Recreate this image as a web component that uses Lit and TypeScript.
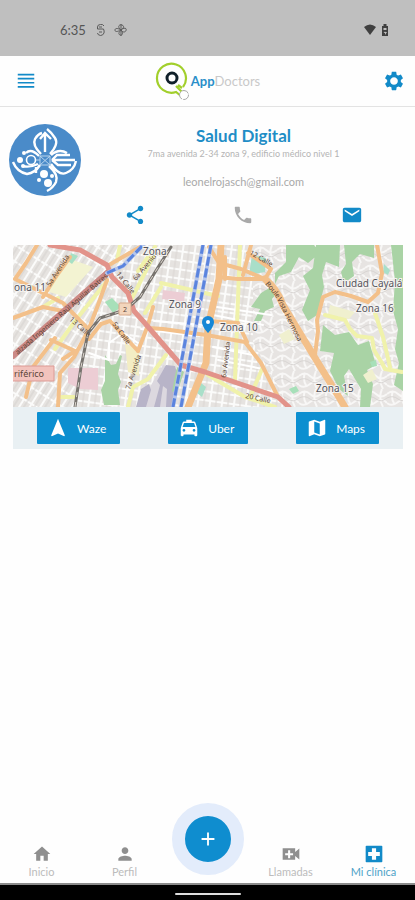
import { LitElement, html, css, svg } from "lit";
import { customElement, property } from "lit/decorators.js";

const icons: Record<string, string> = {
  share: "M18 16.08c-.76 0-1.44.3-1.96.77L8.91 12.7c.05-.23.09-.46.09-.7s-.04-.47-.09-.7l7.05-4.11c.54.5 1.25.81 2.04.81 1.66 0 3-1.34 3-3s-1.34-3-3-3-3 1.34-3 3c0 .24.04.47.09.7L8.04 9.81C7.5 9.31 6.79 9 6 9c-1.66 0-3 1.34-3 3s1.34 3 3 3c.79 0 1.5-.31 2.04-.81l7.12 4.16c-.05.21-.08.43-.08.65 0 1.61 1.31 2.92 2.92 2.92s2.92-1.31 2.92-2.92-1.31-2.92-2.92-2.92z",
  phone: "M6.62 10.79c1.44 2.83 3.76 5.14 6.59 6.59l2.2-2.2c.27-.27.67-.36 1.02-.24 1.12.37 2.33.57 3.57.57.55 0 1 .45 1 1V20c0 .55-.45 1-1 1-9.39 0-17-7.61-17-17 0-.55.45-1 1-1h3.5c.55 0 1 .45 1 1 0 1.25.2 2.45.57 3.57.11.35.03.74-.25 1.02l-2.2 2.2z",
  mail: "M20 4H4c-1.1 0-1.99.9-1.99 2L2 18c0 1.1.9 2 2 2h16c1.1 0 2-.9 2-2V6c0-1.1-.9-2-2-2zm0 4l-8 5-8-5V6l8 5 8-5v2z",
  menu: "M3 4h18v2H3zM3 8.500h18v1.800H3zM3 13h18v1.800H3zM3 17.400h18v2H3z",
  gear: "M19.43 12.98c.04-.32.07-.64.07-.98s-.03-.66-.07-.98l2.11-1.65c.19-.15.24-.42.12-.64l-2-3.46c-.12-.22-.39-.3-.61-.22l-2.49 1c-.52-.4-1.08-.73-1.69-.98l-.38-2.65C14.46 2.18 14.25 2 14 2h-4c-.25 0-.46.18-.49.42l-.38 2.65c-.61.25-1.17.59-1.69.98l-2.49-1c-.23-.09-.49 0-.61.22l-2 3.46c-.13.22-.07.49.12.64l2.11 1.65c-.04.32-.07.65-.07.98s.03.66.07.98l-2.11 1.65c-.19.15-.24.42-.12.64l2 3.46c.12.22.39.3.61.22l2.49-1c.52.4 1.08.73 1.69.98l.38 2.65c.03.24.24.42.49.42h4c.25 0 .46-.18.49-.42l.38-2.65c.61-.25 1.17-.59 1.69-.98l2.49 1c.23.09.49 0 .61-.22l2-3.46c.12-.22.07-.49-.12-.64l-2.11-1.65zM12 16.2c-2.3 0-4.2-1.9-4.2-4.2s1.9-4.2 4.2-4.2 4.2 1.9 4.2 4.2-1.9 4.2-4.2 4.2z",
  nav: "M12 2L4.5 20.29l.71.71L12 18l6.79 3 .71-.71z",
  taxi: "M18.92 6.01C18.72 5.42 18.16 5 17.5 5H15V3H9v2H6.5c-.66 0-1.21.42-1.42 1.01L3 12v8c0 .55.45 1 1 1h1c.55 0 1-.45 1-1v-1h12v1c0 .55.45 1 1 1h1c.55 0 1-.45 1-1v-8l-2.08-5.99zM6.5 16c-.83 0-1.5-.67-1.5-1.5S5.67 13 6.5 13s1.500.67 1.500 1.500S7.330 16 6.500 16zm11 0c-.83 0-1.500-.67-1.500-1.500s.67-1.500 1.500-1.500 1.500.67 1.500 1.500-.67 1.500-1.500 1.500zM5 11l1.500-4.500h11L19 11H5z",
  map: "M20.500 3l-.160.030L15 5.100 9 3 3.360 4.900c-.210.070-.360.250-.360.480V20.500c0 .280.220.500.500.500l.160-.030L9 18.900l6 2.100 5.640-1.900c.210-.070.360-.250.360-.480V3.500c0-.280-.220-.500-.500-.500zM15 19l-6-2.110V5l6 2.110V19z",
  home: "M10 20v-6h4v6h5v-8h3L12 3 2 12h3v8z",
  person: "M12 12c2.210 0 4-1.790 4-4s-1.790-4-4-4-4 1.790-4 4 1.790 4 4 4zm0 2c-2.670 0-8 1.340-8 4v2h16v-2c0-2.660-5.330-4-8-4z",
  video: "M2 5h15v4.500l5-4v13l-5-4V19H2zM8.500 7.500v3.500H5v2.500h3.500V17H11v-3.500h3.500V11H11V7.500z",
  cross: "M3 2h18a1 1 0 0 1 1 1v18a1 1 0 0 1-1 1H3a1 1 0 0 1-1-1V3a1 1 0 0 1 1-1zM9.500 5v4.500H5v5h4.500V19h5v-4.500H19v-5h-4.500V5z",
  plus: "M11 5h2v6h6v2h-6v6h-2v-6H5v-2h6z",
};

@customElement("ui-icon")
class UiIcon extends LitElement {
  @property() name = "";
  static styles = css`
    :host { display: block; width: 22px; height: 22px; }
    svg { display: block; width: 100%; height: 100%; fill: currentColor; }
  `;
  render() {
    return html`<svg viewBox="0 0 24 24" aria-hidden="true"><path fill-rule="evenodd" d=${icons[this.name]}></path></svg>`;
  }
}

@customElement("city-map")
class CityMap extends LitElement {
  static styles = css`
    :host { display: block; }
    svg { display: block; width: 100%; font-family: "Noto Sans", sans-serif; }
    .green { fill: #a9d3a5; }
    .road { fill: none; stroke-linejoin: round; stroke-linecap: round; }
    .minor { stroke: #fff; stroke-width: 2; }
    .yellow { stroke: #f0f2ab; stroke-width: 4; }
    .orange { stroke: #f3c08a; stroke-width: 4; }
    .wide { stroke-width: 7; }
    .red { stroke: #e2938a; stroke-width: 5; }
    .trunk { stroke: #cb8986; stroke-width: 6; }
    .rail { stroke: #77736e; stroke-width: 3; }
    .dash { stroke: #dcd6cf; stroke-width: 1; stroke-dasharray: 5 5; stroke-linecap: butt; }
    .casing { stroke: #b4c5ec; stroke-width: 4; }
    .metro { stroke: #5b84de; stroke-width: 3; stroke-dasharray: 9 3; stroke-linecap: butt; }
    .place { font-size: 10px; fill: #55555c; stroke: #f5f3f1; stroke-width: 2; paint-order: stroke; }
    .street { font-size: 7px; fill: #5b4638; }
    .motorway { font-size: 9px; fill: #5b4638; }
    .shield { fill: #f3d5bc; stroke: #d8a98b; }
    .plate { fill: #f2c3bd; stroke: #dc9a94; }
  `;
  render() {
    const road = (kind: string, d: string) => svg`<path class="road ${kind}" d=${d}></path>`;
    return html`<svg viewBox="0 0 390 162" role="img" aria-label="Mapa de la clínica">
      <defs>
        <pattern id="grid-a" width="14" height="9" patternUnits="userSpaceOnUse" patternTransform="rotate(-58)">
          <rect width="14" height="9" fill="#e6e3e0"></rect><path d="M0 1H14M1 0V9" stroke="#fbfbfa" stroke-width="2"></path><path d="M0 5H14" stroke="#d5d1ce" stroke-width="1"></path>
        </pattern>
        <pattern id="grid-b" width="12" height="9" patternUnits="userSpaceOnUse" patternTransform="rotate(8)">
          <rect width="12" height="9" fill="#e6e3e0"></rect><path d="M0 1H12M1 0V9" stroke="#fbfbfa" stroke-width="2"></path><path d="M7 0V9" stroke="#dad6d3" stroke-width="1"></path>
        </pattern>
        <pattern id="grid-c" width="22" height="18" patternUnits="userSpaceOnUse">
          <rect width="22" height="18" fill="#e7e4e2"></rect>
          <path d="M0 5Q6 0 11 5T22 5M0 14Q5 18 11 13T22 14M6 2Q3 9 8 16M17 0Q13 9 18 18" fill="none" stroke="#f8f7f6" stroke-width="2"></path>
          <path d="M0 9Q6 6 11 10T22 9" fill="none" stroke="#d8d5d3" stroke-width="1"></path>
        </pattern>
      </defs>
      <rect width="390" height="162" fill="url(#grid-b)"></rect>
      <path d="M0 0H125L74 88L62 162H0z" fill="url(#grid-a)"></path>
      <path d="M235 0H390V162H276L240 97V40z" fill="url(#grid-c)"></path>
      <path d="M57 14L80 22L53 52L33 46z" fill="#f3f3d2"></path>
      <path d="M58 8l7 3-6 8-4-3z" fill="#a7e0c4"></path>
      <path d="M55 123h30v22l-18-1-12-6zM150 45l22 3-1 9-22-3z" fill="#eccdd4"></path>
      <path d="M112 98l14 8v25l-11-4z" fill="#f3edc4"></path>
      <path d="M125 162L150 120L165 126L158 162z" fill="#dcd8df"></path>
      <path d="M123 162l5-18 8-5 2 6-5 17zM141 162l6-22-3-4 9-16 9 1 2 6-5 35h-6l1-18-4-3-3 21z" fill="#b8b4c8"></path>
      <path class="green" d="M92 110l6 10 5-1 4-9 2 1-4 18 3 8-3 8 2 15H91l-3-15 4-9zM164 122l7 5-6 18-6 2 3-17z"></path>
      <path class="green" d="M262 28l11-11V0h28l6 8-12 10-9-6-8 15-12 4-4 8zM303 0h24l-1 22-13-5-4 13 2 12-7 28-9 6-6-11 8-20-7-14 10-8zM331 0h30v13l-14-4-8 8 2 14-10 7-3-11 5-8zM378 0h12v146l-9-6 5-22-4-14 3-20-5-18 2-30z"></path>
      <path class="green" d="M310 80l12 10 14-3 9 13 11-4 7 24-9 5 6 14-3 23h-10l1-18-12-20-5 7 4 20-9-7-9-18 4-18-14-2zM248 48l10-6 6 6-5 6 2 8-9 4-4 10h-7l6-12-9-2z"></path>
      <path d="M239 10l14 3-1 14-16 3zM188 138l5 4-4 10-5-4zM371 19l6 6-2 5-5-3z" fill="#a9dfc9"></path>
      <path d="M317 60l25 7-6 7-21-5zM266 90l10-6 6 10-11 5zM350 130l9-6 5 10-9 4z" fill="#f0f0cf"></path>
      <path d="M276 144l7-3 3 5-6 3zM357 117l6-2 1 6-5 1zM92 57l7-4 9 9-8 6z" fill="#a7e0b9"></path>
      ${road("minor", "M76 108L96 115V98L110 88L125 98M128 84L183 91M141 76L190 80M200 70L250 80M204 62L258 70M200 102L240 110M205 115L250 124")}
      ${road("yellow", "M42 104L62 76L94 36M107 0L104 16M125 26L142 2M148 38L205 51M115 162L120 142L135 134L153 110M30 62L45 53M48 152H61M132 68L148 42M118 55L142 8M227 0L222 135M237 152L250 122M195 130L232 152L262 162")}
      ${road("yellow", "M312 70L332 75L337 84L344 91L359 93L361 105L369 118L372 124L389 127M362 68L370 92L377 122")}
      ${road("orange", "M24 0L13 18L2 34L50 58L75 84M94 35L85 60L75 86L61 112L47 128L45 162M0 73L30 62L50 66M42 93L20 122L13 152M38 95L62 106L50 114M76 94L88 79L97 76L125 106M57 12L44 30L30 52M96 20L127 2")}
      ${road("orange", "M135 83L150 84L193 90L232 97L248 118L265 152M125 106L135 80L140 62M196 2L206 18L228 24L252 34L258 24L235 8M206 32L225 34L252 34M196 76L225 78L234 97M212 12L212 34M238 0L230 30")}
      ${road("orange wide", "M208 0L206 34L195 82L193 118L175 162")}
      ${road("orange wide", "M252 34Q264 44 270 60L299 108L332 162")}
      ${road("orange", "M302 110L305 86L304 75L310 52L322 47L338 51L355 57L365 48L369 28L364 0")}
      ${road("red", "M37 0L67 5L94 20L99 32L115 48L121 66L130 76L168 120L192 127L265 152L276 162")}
      ${road("trunk", "M0 111L94 28")}
      ${road("casing", "M94 28L110 21L132 -2")}
      ${road("metro", "M94 28L110 21L132 -2")}
      ${road("rail", "M62 162L68 122L75 88L87 73L112 65L127 52L144 24L158 2")}
      ${road("dash", "M62 162L68 122L75 88L87 73L112 65L127 52L144 24L158 2")}
      ${road("casing", "M190 0L160 162M198 0L168 162")}
      ${road("metro", "M190 0L160 162M198 0L168 162")}
      <path d="M-1 121h42v15H-1z" class="plate"></path>
      <text class="motorway" x="1" y="132">riférico</text>
      <rect class="shield" x="106" y="58" width="12" height="12" rx="1"></rect>
      <text class="street" x="110" y="67">2</text>
      <text class="street" transform="translate(5 110) rotate(-41)">alzada Ingeniero Raúl Aguilar Batres</text>
      <text class="street" transform="translate(37 42) rotate(-57)">5a Avenida</text>
      <text class="street" transform="translate(56 75) rotate(42)">13 Calle</text>
      <text class="street" transform="translate(99 79) rotate(54)">5a Calle</text>
      <text class="street" transform="translate(103 29) rotate(52)">1a Calle</text>
      <text class="street" transform="translate(117 145) rotate(-72)">7a Avenida</text>
      <text class="street" transform="translate(123 36) rotate(-50)">6a Avenida</text>
      <text class="street" transform="translate(236 9) rotate(30)">12 Calle</text>
      <text class="street" transform="translate(252 39) rotate(50)">Boule</text>
      <text class="street" transform="translate(264 54) rotate(64)">Vista Hermosa</text>
      <text class="street" transform="translate(213 133) rotate(-83)">6a Avenida</text>
      <text class="street" transform="translate(232 153) rotate(12)">20 Calle</text>
      <text class="place" x="1" y="46">ona 11</text>
      <text class="place" x="130" y="10">Zona</text>
      <text class="place" x="156" y="63">Zona 9</text>
      <text class="place" x="207" y="86">Zona 10</text>
      <text class="place" x="323" y="42">Ciudad Cayalá</text>
      <text class="place" x="343" y="67">Zona 16</text>
      <text class="place" x="303" y="147">Zona 15</text>
      <path d="M195 71a6 6 0 0 1 6 6c0 5-6 11-6 11s-6-6-6-11a6 6 0 0 1 6-6z" fill="#1687d6"></path>
      <circle cx="195" cy="77" r="2" fill="#fff"></circle>
    </svg>`;
  }
}

@customElement("app-root")
class AppRoot extends LitElement {
  static styles = css`
    :host { display: flex; flex-direction: column; min-height: 100vh; background: #fefefe; font-family: Lato, "Open Sans", sans-serif; color: #a9a9a9; }
    button { font: inherit; border: 0; padding: 0; background: none; color: inherit; cursor: pointer; }
    a { color: inherit; text-decoration: none; }
    svg { display: block; }
    .blue { color: #128ac8; }
    .status { height: 56px; box-sizing: border-box; padding: 4px 24px 0 60px; display: flex; align-items: center; background: #bfbfbf; color: #555; font-size: 13px; line-height: 16px; }
    .marks { margin-left: 9px; flex: 1; }
    .bar { height: 51px; box-sizing: border-box; padding: 0 10px 0 15px; display: flex; align-items: center; justify-content: space-between; border-bottom: 1px solid #e3e3e3; }
    .brand { display: flex; align-items: center; margin-right: 5px; font-size: 13px; line-height: 16px; color: #c9c9c9; }
    .brand b { color: #2a8fc9; }
    .profile { display: flex; padding: 17px 9px 0; }
    .avatar { flex: none; width: 72px; height: 72px; }
    .info { flex: 1; text-align: center; }
    h1 { margin: 2px 0 0; font-size: 17px; line-height: 20px; font-weight: 700; color: #1f8dc6; }
    p { margin: 0; font-size: 9px; line-height: 16px; color: #b4b4b4; }
    .email { display: block; margin-top: 12px; font-size: 11px; line-height: 16px; }
    .contact { display: flex; justify-content: space-around; margin-top: 14px; }
    .place { margin: 19px 12px 0 13px; background: #e9f0f3; }
    .apps { display: flex; justify-content: space-around; padding: 5px 0; }
    .app { height: 32px; display: flex; align-items: center; gap: 8px; padding: 0 14px 0 10px; background: #0c8fd0; color: #fff; font-size: 12px; border-radius: 1px; }
    .space { flex: 1; }
    .tabs { display: grid; grid-template-columns: repeat(5, 1fr); border-bottom: 2px solid #8b8b8b; height: 82px; box-sizing: border-box; align-items: end; }
    .tab { display: flex; flex-direction: column; align-items: center; font-size: 11px; line-height: 16px; padding-bottom: 3px; color: #bcbcbc; }
    .tab ui-icon { width: 20px; height: 20px; color: #8f8f8f; }
    .on { color: #4ea3c8; }
    .tab.on ui-icon { color: #128ac8; }
    .fab { justify-self: center; align-self: start; width: 72px; height: 72px; box-sizing: border-box; border: 13px solid #e3ecfb; border-radius: 50%; background: #0f8dcf; color: #fff; display: grid; place-items: center; }
    .home { height: 15px; background: #000; display: grid; place-items: center; padding-top: 2px; box-sizing: border-box; }
    .handle { width: 66px; height: 2px; border-radius: 1px; background: #ddd; }
  `;

  render() {
    const tab = (icon: string, label: string, on = false) =>
      html`<a href="#" class="tab ${on ? "on" : ""}"><ui-icon name=${icon}></ui-icon>${label}</a>`;
    const app = (icon: string, label: string) =>
      html`<button class="app"><ui-icon name=${icon}></ui-icon>${label}</button>`;
    return html`
      <div class="status">
        <span>6:35</span>
        <svg class="marks" height="14" viewBox="0 0 40 14" preserveAspectRatio="xMinYMid meet" fill="none" stroke="#5a5a5a">
          <path d="M9 3Q8 1 5.500 1.500Q2.500 1.500 2.500 4V6H8.500Q9.500 8 9 10Q8 12.500 5.500 12.500Q2.500 12 2.500 10M4 4H7M4 9H7"></path>
          <path d="M26 7C22 4 24 1 27 2S28 6 26 7C29 4 32 5 31 7.500S27 9 26 7C29 10 27 13 25 12S24 9 26 7C22 9 20 9 20 7S23 5 26 7M26 1V13"></path>
        </svg>
        <svg width="28" height="14" viewBox="0 0 28 14" fill="#404040">
          <path d="M1 4Q7-1 13 4L7 12z"></path>
          <path d="M19 3h1.500V1h3v2H25v10h-6zM20.500 5v2h3V5zM22.500 8l-2 2h1.500v2l2-3h-2z" fill-rule="evenodd"></path>
        </svg>
      </div>
      <header class="bar">
        <button class="blue" aria-label="Menú"><ui-icon name="menu"></ui-icon></button>
        <div class="brand">
          <svg width="36" height="40" viewBox="0 0 36 40" fill="none">
            <path d="M28 26A14.500 14.500 0 1 0 21 31L26 35M21 25L28 32M27 27L23 24" stroke="#a2cf2c" stroke-width="2.200"></path>
            <circle cx="17" cy="17" r="5" stroke="#10202a" stroke-width="3"></circle>
            <circle cx="29" cy="34" r="4.500" stroke="#a9a9a9" stroke-dasharray="8 1" fill="#fff"></circle>
          </svg>
          <span><b>App</b>Doctors</span>
        </div>
        <button class="blue" aria-label="Ajustes"><ui-icon name="gear"></ui-icon></button>
      </header>
      <section class="profile">
        <svg class="avatar" viewBox="0 0 72 72" fill="none" stroke="#fff" stroke-width="2.400">
          <circle cx="36" cy="36" r="36" fill="#4a8bc9" stroke="none"></circle>
          <path d="M32 30Q23 21 26 15Q29 10 33 9M38 5Q42 8 46 14Q50 20 41 30M36 28V10M31 15L36 9L42 15"></path>
          <path d="M30 32Q22 24 17 29M14 42Q20 44 29 40M4 38Q8 48 18 50Q26 49 31 41M27 43V49M42 31Q50 24 58 29M43 36L48 31H61M43 36H66M43 36L49 41H62M42 40Q50 52 57 49Q65 46 67 37M40 42Q50 51 47 58Q44 64 38 67"></path>
          <circle cx="22" cy="36" r="4.500" stroke-width="1.600"></circle>
          <path d="M31 32h10v9H31zM31 32l10 9M41 32l-10 9M27 36h4" stroke="#b9d5ee" stroke-width="1"></path>
          <g fill="#fff" stroke="none"><circle cx="11" cy="36" r="3"></circle><circle cx="15" cy="29" r="2"></circle><circle cx="14" cy="42" r="2"></circle><circle cx="35" cy="50" r="4"></circle><circle cx="30" cy="56" r="2"></circle><circle cx="39" cy="59" r="4"></circle><circle cx="43" cy="52" r="2"></circle></g>
        </svg>
        <div class="info">
          <h1>Salud Digital</h1>
          <p>7ma avenida 2-34 zona 9, edificio médico nivel 1</p>
          <a class="email" href="mailto:leonelrojasch@gmail.com">leonelrojasch@gmail.com</a>
          <div class="contact">
            <button class="blue" aria-label="Compartir"><ui-icon name="share"></ui-icon></button>
            <button aria-label="Llamar"><ui-icon name="phone"></ui-icon></button>
            <button class="blue" aria-label="Correo"><ui-icon name="mail"></ui-icon></button>
          </div>
        </div>
      </section>
      <section class="place">
        <city-map></city-map>
        <div class="apps">${app("nav", "Waze")}${app("taxi", "Uber")}${app("map", "Maps")}</div>
      </section>
      <div class="space"></div>
      <nav class="tabs">
        ${tab("home", "Inicio")}${tab("person", "Perfil")}
        <button class="fab" aria-label="Agregar"><ui-icon name="plus"></ui-icon></button>
        ${tab("video", "Llamadas")}${tab("cross", "Mi clínica", true)}
      </nav>
      <div class="home"><div class="handle"></div></div>
    `;
  }
}
